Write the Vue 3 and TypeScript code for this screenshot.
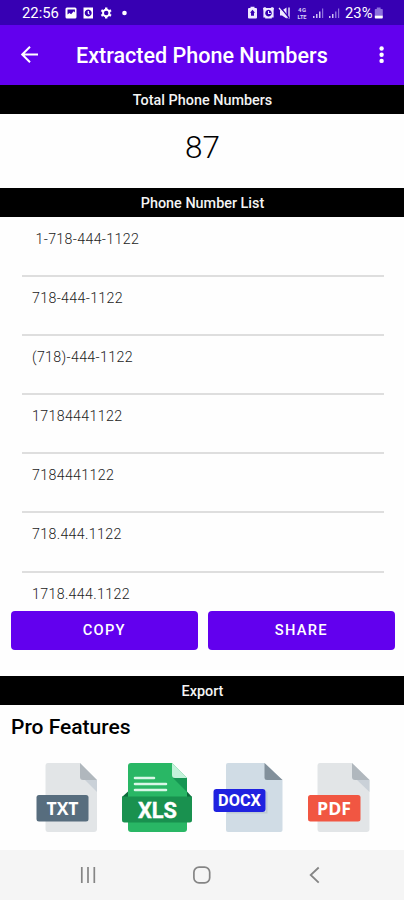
<script setup lang="ts">
interface PhoneEntry {
  id: number
  text: string
  indented?: boolean
}

const total: number = 87

const entries: PhoneEntry[] = [
  { id: 1, text: '1-718-444-1122', indented: true },
  { id: 2, text: '718-444-1122' },
  { id: 3, text: '(718)-444-1122' },
  { id: 4, text: '17184441122' },
  { id: 5, text: '7184441122' },
  { id: 6, text: '718.444.1122' },
  { id: 7, text: '1718.444.1122' },
]
</script>

<template>
  <div class="screen">
    <div class="status">
      <span class="clock">22:56</span>
      <svg class="status-left" width="66" height="25" viewBox="0 0 66 25">
        <path fill="#fff" fill-rule="evenodd" d="M3 7.500h8q1.500 0 1.500 1.500v8q0 1.500-1.500 1.500H3q-1.500 0-1.500-1.500V9q0-1.500 1.500-1.500zM3.500 9.500v5l2-1.500 1.600 1.200 2.600-3 1.200 1.200V9.500z" />
        <path fill="#fff" fill-rule="evenodd" d="M19.500 7.500h9.500v11h-9.500zM24.200 9.500a3.500 3.500 0 1 0 .01 0zM23.700 11h1.200v2l1 1-.8.700-1.400-1.300z" />
        <g transform="translate(42.200 13)" fill="none" stroke="#fff">
          <circle r="3.200" stroke-width="1.900" />
          <path stroke-width="2.400" d="M0-3.500v-2M0 3.500v2M3-1.800l1.800-1M-3 1.800l-1.800 1M3 1.800l1.800 1M-3-1.800l-1.800-1" />
        </g>
        <circle cx="60.500" cy="13" r="2.300" fill="#fff" />
      </svg>
      <svg class="status-right" width="96" height="25" viewBox="0 0 96 25">
        <path fill="#eee9ff" fill-rule="evenodd" d="M2 8h1.500V6.800h4V8H9q1 0 1 1v8.500q0 1-1 1H2q-1 0-1-1V9q0-1 1-1zM5.500 9.700l-2.500 3h1v3h3v-3h1z" />
        <path fill="#eee9ff" fill-rule="evenodd" d="M16 8l2-1 1.300 1h4.400L25 7l2 1-.4 3v6.500h-1.800v1h-6.600v-1h-1.800V11zM21.500 9.800a3.300 3.300 0 1 0 .01 0zM21 11h1v2h1.800v1H21z" />
        <path fill="#eee9ff" d="M33 10.500h2l4.500-3v11L35 15.500h-2zM41.300 7.500h1.400v11h-1.400z" />
        <path stroke="#3700b3" stroke-width="1.500" d="M33 7l9 11" />
        <path stroke="#eee9ff" stroke-width="1.200" d="M32 8l8.500 10" />
        <text x="51" y="12" class="net" textLength="8">4G</text>
        <text x="50.500" y="18.700" class="net" textLength="9" lengthAdjust="spacingAndGlyphs">LTE</text>
        <path fill="#cfc3f4" d="M66 16h1.500v2H66zM69 14h1.500v4H69zM72 11.500h1.500V18H72zM82 16h1.500v2H82zM85 14h1.500v4H85z" />
        <path fill="#8d70dd" d="M75 8.500h1.200V18H75zM88 11.500h1.500V18H88zM91 8.500h1.200V18H91z" />
      </svg>
      <span class="percent">23%</span>
      <svg class="battery" width="10" height="25" viewBox="0 0 10 25">
        <path fill="#8d70dd" d="M2.800 7.500h3.800V9H8q.8 0 .8.800V15.500H.8V9.800Q.8 9 1.600 9h1.200z" />
        <path fill="#fff" d="M.8 15.500h8v2.200q0 .8-.8.800H1.600q-.8 0-.8-.8z" />
      </svg>
    </div>

    <header class="appbar">
      <svg class="back" width="20" height="20" viewBox="0 0 20 20" fill="none" stroke="#fff" stroke-width="2">
        <path d="M19 9.500H3.300M11 1.700L3.200 9.500l7.800 7.800" />
      </svg>
      <h1 class="title">Extracted Phone Numbers</h1>
      <svg class="more" width="6" height="20" viewBox="0 0 6 20" fill="#fff">
        <circle cx="2.600" cy="3.500" r="2.200" />
        <circle cx="2.600" cy="9.700" r="2.200" />
        <circle cx="2.600" cy="15.900" r="2.200" />
      </svg>
    </header>

    <div class="section">Total Phone Numbers</div>
    <div class="total">{{ total }}</div>
    <div class="section">Phone Number List</div>

    <ul class="list">
      <li v-for="entry in entries" :key="entry.id" class="row" :class="{ indented: entry.indented }">
        {{ entry.text }}
      </li>
    </ul>

    <div class="actions">
      <button type="button" class="btn">COPY</button>
      <button type="button" class="btn">SHARE</button>
    </div>

    <div class="section">Export</div>
    <h2 class="pro">Pro Features</h2>

    <div class="formats">
      <svg width="62" height="70" viewBox="0 0 62 70">
        <path fill="#e2e5e7" d="M12 0H44l17 17v49q0 3-3 3H12q-2.500 0-2.500-3V3Q9.500 0 12 0z" />
        <path fill="#cad1d8" d="M49 17h12v12z" />
        <path fill="#b0b7bd" d="M44 0l17 17H47q-3 0-3-3z" />
        <rect x=".5" y="32" width="52" height="26.500" rx="2.500" fill="#576d7e" />
        <text x="10.500" y="51.500" class="label" font-size="17" textLength="32" lengthAdjust="spacingAndGlyphs">TXT</text>
      </svg>
      <svg width="70" height="70" viewBox="0 0 70 70">
        <path fill="#29b765" d="M9 0H50l15 15v51q0 3-3 3H9q-3 0-3-3V3Q6 0 9 0z" />
        <path fill="#159653" d="M51 15h14v14z" />
        <path fill="#c3f2da" d="M50 0l15 15H53q-3 0-3-3z" />
        <path fill="#0c6b3b" d="M6 28.500V34H0zM65 28.500V34h5z" />
        <path fill="#19914f" d="M0 33.500h70V57q0 2.500-2.500 2.500h-65Q0 59.500 0 57z" />
        <path stroke="#d9f7e7" stroke-width="2.600" stroke-linecap="round" d="M13 15h19M13 21h31M13 27h31" />
        <text x="16" y="54.500" class="xls" font-size="22.500" textLength="39" lengthAdjust="spacingAndGlyphs">XLS</text>
      </svg>
      <svg width="70" height="70" viewBox="0 0 70 70">
        <path fill="#d0dce5" d="M15 0H51.500l18 17v50q0 2-2 2H15q-2 0-2-2V2q0-2 2-2z" />
        <path fill="#bdcad4" d="M14 49h39V28l1.500 1.500v21H14z" />
        <path fill="#82909b" d="M51.500 0l18 17H54q-2.500 0-2.500-2.500z" />
        <rect x=".5" y="26" width="52" height="23" rx="3" fill="#1f22e0" />
        <text x="5" y="43.200" class="docx" font-size="16" textLength="43" lengthAdjust="spacingAndGlyphs">DOCX</text>
      </svg>
      <svg width="63" height="70" viewBox="0 0 63 70">
        <path fill="#e2e5e7" d="M12 0H44l17.500 17v49q0 3-3 3H12q-2.500 0-2.500-3V3Q9.500 0 12 0z" />
        <path fill="#cad1d8" d="M49 17h12.500v12z" />
        <path fill="#b0b7bd" d="M44 0l17.500 17H47q-3 0-3-3z" />
        <rect x="0" y="32" width="52.500" height="26.500" rx="2.500" fill="#f15642" />
        <text x="9" y="51.500" class="label" font-size="17" textLength="34" lengthAdjust="spacingAndGlyphs">PDF</text>
      </svg>
    </div>

    <nav class="navbar">
      <svg width="18" height="18" viewBox="0 0 18 18" stroke="#858585" stroke-width="1.700">
        <path d="M1.800 1v16M8 1v16M14.300 1v16" />
      </svg>
      <svg width="18" height="18" viewBox="0 0 18 18" fill="none" stroke="#858585" stroke-width="1.700">
        <rect x=".9" y="1.100" width="15.800" height="15.800" rx="5.200" />
      </svg>
      <svg width="18" height="18" viewBox="0 0 18 18" fill="none" stroke="#858585" stroke-width="1.800">
        <path d="M12.700 1.500L4.700 9l8 7.700" />
      </svg>
    </nav>
  </div>
</template>

<style>
body {
  background: #fff;
}
</style>

<style scoped>
.screen {
  display: flex;
  flex-direction: column;
  width: 404px;
  height: 900px;
  overflow: hidden;
  background: #fefefe;
  font-family: Roboto, "Liberation Sans", sans-serif;
  color: #000;
}
.status {
  display: flex;
  box-sizing: border-box;
  flex: 0 0 25px;
  height: 25px;
  min-height: 0;
  background: #3700b3;
  color: #fff;
  line-height: 26px;
  font-size: 14.800px;
  padding-left: 22px;
}
.clock {
  width: 42px;
}
.status-right {
  margin-left: 117px;
}
.percent {
  width: 28px;
  margin-left: 2px;
}
.battery {
  margin-left: 1px;
}
.net {
  font-size: 6px;
  font-weight: 700;
  fill: #d9d0f7;
}
.appbar {
  display: flex;
  align-items: center;
  flex: 0 0 60px;
  box-sizing: border-box;
  background: #6200ee;
  color: #fff;
  padding: 0 19px;
}
.title {
  flex: 1;
  margin: 0 0 0 37px;
  font-size: 21.550px;
  font-weight: 500;
  white-space: nowrap;
}
.section {
  flex: 0 0 29px;
  height: 29px;
  min-height: 0;
  background: #000;
  color: #f4f4f4;
  text-align: center;
  font-size: 14.400px;
  font-weight: 500;
  line-height: 31px;
  text-indent: 1px;
}
.total {
  flex: 0 0 74px;
  font-size: 31.500px;
  font-weight: 300;
  line-height: 68px;
  text-align: center;
  text-indent: 1px;
}
.list {
  flex: 0 0 393.500px;
  box-sizing: border-box;
  margin: 0;
  padding: 1px 20.500px 0 21.500px;
  overflow: hidden;
  list-style: none;
}
.row {
  box-sizing: border-box;
  height: 59.100px;
  border-bottom: 2px solid #dedede;
  padding: 13px 10px 0 10.500px;
  color: #222;
  font-size: 14.200px;
  font-weight: 300;
  letter-spacing: 0.35px;
  line-height: 17px;
}
.row.indented {
  padding-left: 14px;
}
.actions {
  display: flex;
  flex: 0 0 65.500px;
  box-sizing: border-box;
  gap: 10.500px;
  padding: 0 9.500px 26.500px 11px;
}
.btn {
  flex: 1;
  height: 39px;
  padding: 0;
  border: 0;
  border-radius: 4px;
  background: #6200ee;
  color: #fff;
  font: 500 14.700px Roboto, "Liberation Sans", sans-serif;
  letter-spacing: 1.250px;
}
.pro {
  flex: 0 0 58px;
  margin: 0;
  padding-left: 11px;
  font-size: 21px;
  font-weight: 500;
  line-height: 44px;
}
.formats {
  display: flex;
  flex: 0 0 87px;
  padding-left: 36px;
}
.formats svg + svg {
  margin-left: 24px;
}
.formats svg:nth-child(3) {
  margin-left: 21px;
}
.formats svg:nth-child(4) {
  margin-left: 25px;
}
.label {
  fill: #fff;
  font-family: "Open Sans", sans-serif;
  font-weight: 700;
}
.docx {
  fill: #fff;
  font-weight: 700;
}
.xls {
  fill: #fff;
  stroke: #fff;
  stroke-width: 0.400px;
  font-weight: 700;
}
.navbar {
  display: flex;
  flex: 0 0 50px;
  justify-content: space-between;
  align-items: center;
  box-sizing: border-box;
  padding: 0 80px;
  background: #f5f5f5;
}
</style>
